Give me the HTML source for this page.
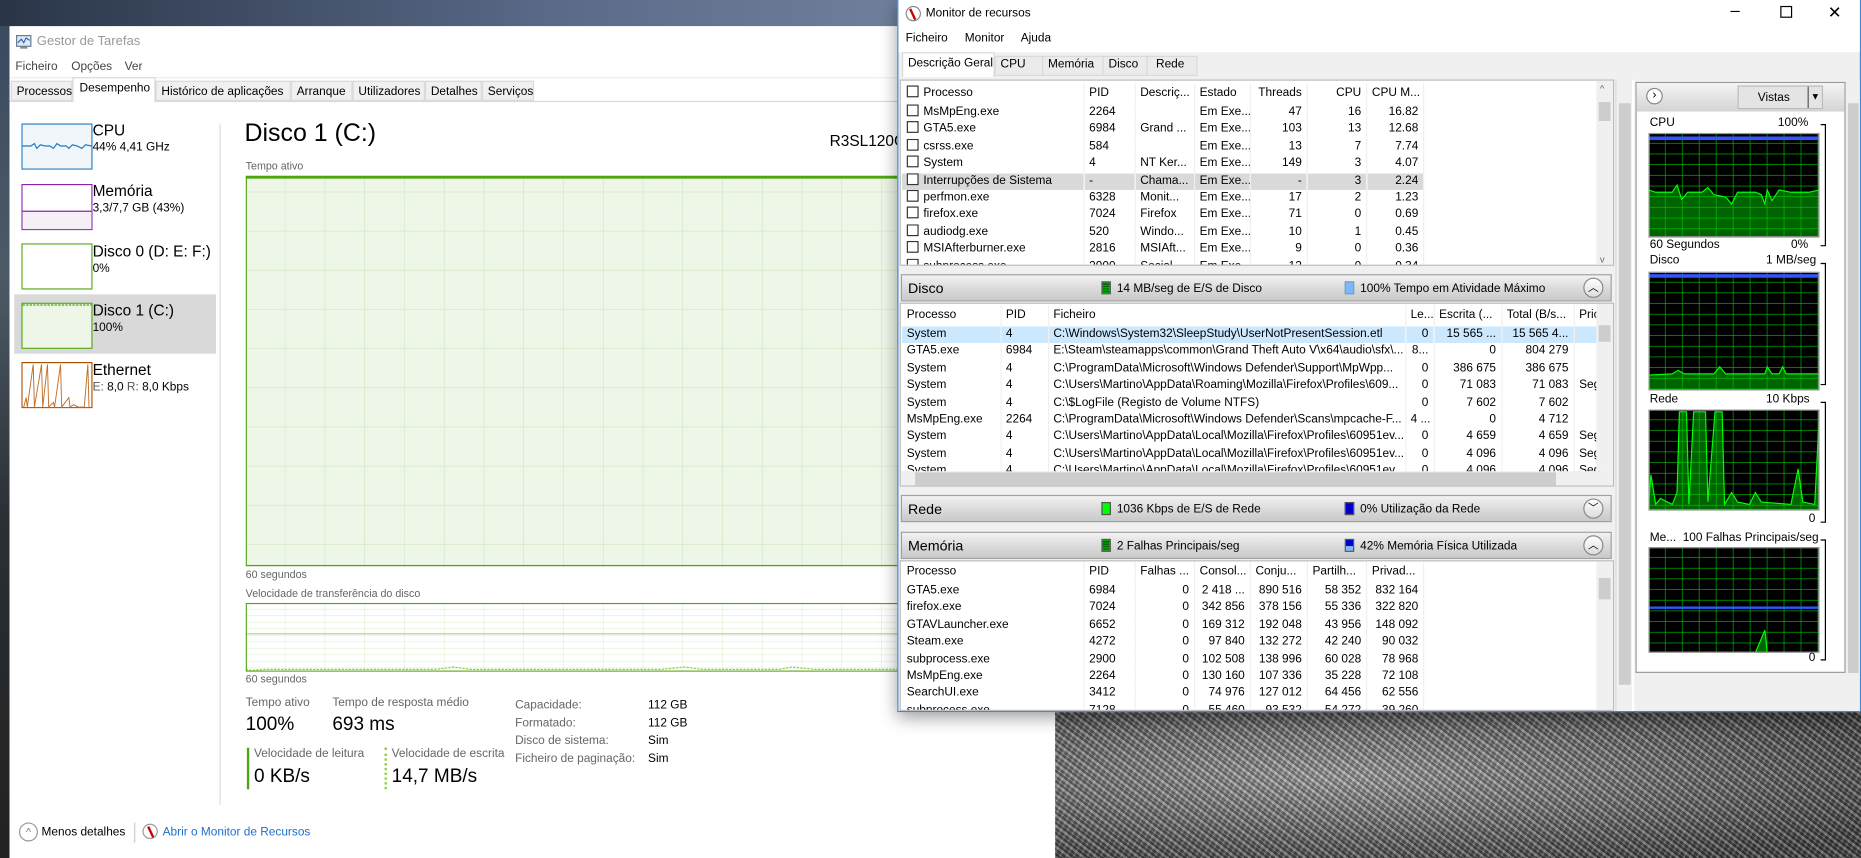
<!DOCTYPE html>
<html><head><meta charset="utf-8"><style>
*{margin:0;padding:0;box-sizing:border-box}
body{width:1861px;height:858px;overflow:hidden;background:#333;font-family:"Liberation Sans",sans-serif}
#s{position:absolute;left:0;top:0;width:1568px;height:723px;transform:scale(1.18686);transform-origin:0 0;overflow:hidden}
.a{position:absolute;white-space:nowrap}
table{border-collapse:collapse;table-layout:fixed;position:absolute;font-size:10px;color:#000}
td{height:14.4px;padding:0 4px;overflow:hidden;white-space:nowrap;text-overflow:clip;border-right:1px solid #f0f0f0;line-height:14.4px}
td.r{text-align:right}
tr.h td{height:18px;color:#000}
.cb{display:inline-block;width:10px;height:10px;border:1px solid #333;vertical-align:-1px;margin-right:4px;background:#fff}
.sec{position:absolute;left:759px;width:599px;height:23px;background:linear-gradient(#f2f2f2,#dcdcdc 50%,#c9c9c9);border:1px solid #a0a0a0;font-size:10px}
.sec .t{position:absolute;left:5px;top:4px;font-size:12px}
.sec .l{position:absolute;top:5px;font-size:10px}
.sw{display:inline-block;width:8px;height:11px;border:1px solid #555;vertical-align:-2px;margin-right:5px}
.btn{position:absolute;right:6px;top:2px;width:17px;height:17px;border:1px solid #888;border-radius:50%;background:linear-gradient(#fff,#ddd);font-size:9px;text-align:center;line-height:15px}
.tm{font-size:10px;color:#000}
</style></head><body><div id="s">
<!-- wallpaper -->
<div class="a" style="left:0;top:0;width:1568px;height:723px;background:linear-gradient(90deg,#2a3548,#5a6a88 30%,#7e8ea8 60%,#98a6bb)"></div>
<div class="a" style="left:0;top:22px;width:10px;height:701px;background:linear-gradient(#3a4a60,#4d5a66 30%,#2a2f33 60%,#222)"></div>
<div class="a" style="left:889px;top:598px;width:679px;height:125px;background:radial-gradient(ellipse at 35% 45%,#a8a6a8,#7a7a7a 40%,#444 85%);"></div>
<div class="a" style="left:889px;top:598px;width:679px;height:125px;opacity:.45;background:repeating-linear-gradient(37deg,rgba(255,255,255,.5) 0 2px,rgba(0,0,0,.6) 2px 4px,rgba(255,255,255,.3) 4px 5px,rgba(0,0,0,.4) 5px 7px),repeating-linear-gradient(-61deg,rgba(255,255,255,.4) 0 2px,rgba(0,0,0,.5) 2px 5px);"></div>

<!-- Task manager -->
<div class="a" style="left:8px;top:22px;width:881px;height:701px;background:#fff"></div>
<svg class="a" style="left:13px;top:29px" width="14" height="13"><rect x="1" y="1" width="12" height="9" fill="#dfe9f5" stroke="#6a7a90"/><polyline points="2,7 5,4 7,7 9,3 12,5" fill="none" stroke="#2a6ac0"/><rect x="4" y="10" width="6" height="2" fill="#888"/></svg>
<div class="a" style="left:31px;top:29px;font-size:11px;color:#999">Gestor de Tarefas</div>
<div class="a" style="left:13px;top:51px;font-size:10px;color:#444">Ficheiro</div>
<div class="a" style="left:60px;top:51px;font-size:10px;color:#444">Opções</div>
<div class="a" style="left:105px;top:51px;font-size:10px;color:#444">Ver</div>
<div class="a" style="left:8px;top:65px;width:881px;height:1px;background:#eee"></div>
<div class="a" style="left:8px;top:85px;width:881px;height:1px;background:#d9d9d9"></div>
<div class="a tm" style="left:9px;top:68px;height:17px;width:52px;background:#f0f0f0;border:1px solid #d9d9d9;padding:3px 4px">Processos</div>
<div class="a tm" style="left:61px;top:65px;height:21px;width:70px;background:#fff;border:1px solid #d9d9d9;border-bottom:none;padding:3px 5px">Desempenho</div>
<div class="a tm" style="left:131px;top:68px;height:17px;width:114px;background:#f0f0f0;border:1px solid #d9d9d9;padding:3px 4px">Histórico de aplicações</div>
<div class="a tm" style="left:245px;top:68px;height:17px;width:52px;background:#f0f0f0;border:1px solid #d9d9d9;padding:3px 4px">Arranque</div>
<div class="a tm" style="left:297px;top:68px;height:17px;width:61px;background:#f0f0f0;border:1px solid #d9d9d9;padding:3px 4px">Utilizadores</div>
<div class="a tm" style="left:358px;top:68px;height:17px;width:48px;background:#f0f0f0;border:1px solid #d9d9d9;padding:3px 4px">Detalhes</div>
<div class="a tm" style="left:406px;top:68px;height:17px;width:44px;background:#f0f0f0;border:1px solid #d9d9d9;padding:3px 4px">Serviços</div>

<!-- left items -->
<div class="a" style="left:12px;top:248px;width:170px;height:50px;background:#d9d9d9"></div>
<svg class="a" style="left:18px;top:104px" width="60" height="39"><rect x=".5" y=".5" width="59" height="38" fill="#f1f6fb" stroke="#1f7ac4"/><polyline points="1,19 8,19 11,17 13,21 16,18 20,19 24,19 27,21 30,17 33,19 38,19 40,21 43,18 47,19 51,21 54,18 59,19" fill="none" stroke="#1f7ac4"/></svg>
<div class="a" style="left:78px;top:102px;font-size:13px">CPU</div><div class="a" style="left:78px;top:119px;font-size:10px">44% 4,41 GHz</div>
<svg class="a" style="left:18px;top:155px" width="60" height="39"><rect x=".5" y=".5" width="59" height="38" fill="#fff" stroke="#8e22b4"/><rect x="1" y="23" width="58" height="15" fill="#f4f0f6"/><line x1="1" y1="23" x2="59" y2="23" stroke="#8e22b4"/></svg>
<div class="a" style="left:78px;top:153px;font-size:13px">Memória</div><div class="a" style="left:78px;top:170px;font-size:10px">3,3/7,7 GB (43%)</div>
<svg class="a" style="left:18px;top:205px" width="60" height="39"><rect x=".5" y=".5" width="59" height="38" fill="#fff" stroke="#4da60c"/></svg>
<div class="a" style="left:78px;top:204px;font-size:13px">Disco 0 (D: E: F:)</div><div class="a" style="left:78px;top:221px;font-size:10px">0%</div>
<svg class="a" style="left:18px;top:255px" width="60" height="39"><rect x=".5" y=".5" width="59" height="38" fill="#eef6e8" stroke="#4da60c"/><line x1="1" y1="2" x2="59" y2="2" stroke="#4da60c" stroke-dasharray="2 1"/></svg>
<div class="a" style="left:78px;top:254px;font-size:13px">Disco 1 (C:)</div><div class="a" style="left:78px;top:271px;font-size:10px">100%</div>
<svg class="a" style="left:18px;top:305px" width="60" height="39"><rect x=".5" y=".5" width="59" height="38" fill="#fff" stroke="#a74f01"/><polyline points="2,38 4,30 5,38 10,2 11,38 17,2 18,38 22,2 23,38 27,34 28,38 33,2 34,38 40,30 41,38 44,36 48,38 53,38 56,2 57,38" fill="none" stroke="#c0702a" stroke-width=".8"/></svg>
<div class="a" style="left:78px;top:304px;font-size:13px">Ethernet</div><div class="a" style="left:78px;top:321px;font-size:10px;color:#555">E: <span style="color:#000">8,0</span> R: <span style="color:#000">8,0 Kbps</span></div>
<div class="a" style="left:185px;top:104px;width:1px;height:574px;background:#ddd"></div>

<div class="a" style="left:206px;top:101px;font-size:21px">Disco 1 (C:)</div>
<div class="a" style="left:699px;top:111px;font-size:13px">R3SL120G</div>
<div class="a" style="left:207px;top:135px;font-size:9px;color:#666">Tempo ativo</div>
<svg class="a" style="left:207px;top:148px" width="560" height="330"><defs><pattern id="gp" width="33.5" height="33" patternUnits="userSpaceOnUse" x="0" y="-19"><path d="M33.5 0V33M0 33H33.5" fill="none" stroke="#cfe6c0" stroke-width="1"/></pattern></defs><rect width="560" height="330" fill="#eef6e8"/><rect width="560" height="330" fill="url(#gp)"/><rect x=".5" y=".5" width="559" height="328" fill="none" stroke="#4da60c"/><line x1="0" y1="1.5" x2="560" y2="1.5" stroke="#4da60c" stroke-width="2"/></svg>
<div class="a" style="left:207px;top:479px;font-size:9px;color:#666">60 segundos</div>
<div class="a" style="left:207px;top:495px;font-size:9px;color:#666">Velocidade de transferência do disco</div>
<svg class="a" style="left:207px;top:508px" width="560" height="58"><defs><pattern id="gq" width="33.5" height="5.5" patternUnits="userSpaceOnUse"><path d="M33.5 0V6M0 5.5H34" fill="none" stroke="#dcefd0"/></pattern></defs><rect width="560" height="58" fill="#fff"/><rect width="560" height="58" fill="url(#gq)"/><line x1="0" y1="26" x2="560" y2="26" stroke="#a8d48a"/><polyline points="0,56 5,57 15,56 160,56 175,54 190,56 350,56 370,54 385,56 450,56 460,54 470,55 480,56 560,56" fill="none" stroke="#8ed040" stroke-dasharray="2 1"/><rect x=".5" y=".5" width="559" height="57" fill="none" stroke="#4da60c"/></svg>
<div class="a" style="left:207px;top:567px;font-size:9px;color:#666">60 segundos</div>
<div class="a" style="left:207px;top:587px;font-size:10px;color:#666">Tempo ativo</div>
<div class="a" style="left:280px;top:587px;font-size:10px;color:#666">Tempo de resposta médio</div>
<div class="a" style="left:207px;top:602px;font-size:16px">100%</div>
<div class="a" style="left:280px;top:602px;font-size:16px">693 ms</div>
<div class="a" style="left:208px;top:630px;width:2px;height:35px;background:#4da60c"></div>
<div class="a" style="left:324px;top:630px;width:0;height:35px;border-left:2px dotted #8ed040"></div>
<div class="a" style="left:214px;top:630px;font-size:10px;color:#666">Velocidade de leitura</div>
<div class="a" style="left:330px;top:630px;font-size:10px;color:#666">Velocidade de escrita</div>
<div class="a" style="left:214px;top:646px;font-size:16px">0 KB/s</div>
<div class="a" style="left:330px;top:646px;font-size:16px">14,7 MB/s</div>
<div class="a" style="left:434px;top:587px;font-size:10px;color:#666;line-height:15px">Capacidade:<br>Formatado:<br>Disco de sistema:<br>Ficheiro de paginação:</div>
<div class="a" style="left:546px;top:587px;font-size:10px;line-height:15px">112 GB<br>112 GB<br>Sim<br>Sim</div>
<div class="a" style="left:16px;top:693px;width:16px;height:16px;border:1px solid #999;border-radius:50%;font-size:9px;text-align:center;line-height:14px;color:#777">^</div>
<div class="a" style="left:35px;top:696px;font-size:10px">Menos detalhes</div>
<div class="a" style="left:113px;top:693px;width:1px;height:17px;background:#ccc"></div>
<div class="a" style="left:120px;top:694px;width:13px;height:13px;border:1px solid #999;border-radius:50%;background:#fff"><div style="position:absolute;left:5px;top:1px;width:2px;height:10px;background:#c00;transform:rotate(-25deg)"></div></div>
<div class="a" style="left:137px;top:696px;font-size:10px;color:#1e6fd0">Abrir o Monitor de Recursos</div>

<!-- Resource monitor -->
<div class="a" style="left:756px;top:0;width:812px;height:600px;background:#f0f0f0;border:1px solid #3a8ad8;box-shadow:0 4px 14px rgba(0,0,0,.4)"></div>
<div class="a" style="left:757px;top:0;width:810px;height:22px;background:#fff"></div>
<div class="a" style="left:763px;top:5px;width:13px;height:13px;border:1px solid #888;border-radius:50%"><div style="position:absolute;left:4px;top:1px;width:2px;height:10px;background:#c00;transform:rotate(-25deg)"></div></div>
<div class="a" style="left:780px;top:6px;font-size:10px">Monitor de recursos</div>
<div class="a" style="left:1458px;top:0;font-size:14px;font-weight:300">–</div>
<div class="a" style="left:1500px;top:5px;width:10px;height:10px;border:1px solid #000"></div>
<div class="a" style="left:1540px;top:2px;font-size:14px">✕</div>
<div class="a" style="left:757px;top:22px;width:810px;height:22px;background:#fff"></div>
<div class="a" style="left:763px;top:27px;font-size:10px;word-spacing:2px">Ficheiro&nbsp;&nbsp; Monitor&nbsp;&nbsp; Ajuda</div>
<div class="a" style="left:838px;top:47px;width:171px;height:17px;background:#ebebeb;border:1px solid #d9d9d9"></div>
<div class="a" style="left:760px;top:44px;width:78px;height:21px;background:#fff;border:1px solid #d9d9d9;border-bottom:none;font-size:10px;padding:3px 4px">Descrição Geral</div>
<div class="a" style="left:843px;top:49px;font-size:10px">CPU</div>
<div class="a" style="left:878px;top:47px;width:1px;height:17px;background:#d9d9d9"></div>
<div class="a" style="left:883px;top:49px;font-size:10px">Memória</div>
<div class="a" style="left:929px;top:47px;width:1px;height:17px;background:#d9d9d9"></div>
<div class="a" style="left:934px;top:49px;font-size:10px">Disco</div>
<div class="a" style="left:966px;top:47px;width:1px;height:17px;background:#d9d9d9"></div>
<div class="a" style="left:974px;top:49px;font-size:10px">Rede</div>

<!-- overview table -->
<div class="a" style="left:758px;top:67px;width:602px;height:157px;background:#fff;border:1px solid #bbb;overflow:hidden">
<table style="left:1px;top:2px;width:440px">
<col style="width:153px"><col style="width:43px"><col style="width:50px"><col style="width:47px"><col style="width:48px"><col style="width:50px"><col style="width:48px">
<tr class="h"><td><span class="cb"></span>Processo</td><td>PID</td><td>Descriç...</td><td>Estado</td><td class="r">Threads</td><td class="r">CPU</td><td>CPU M...</td></tr>
<tr><td><span class="cb"></span>MsMpEng.exe</td><td>2264</td><td></td><td>Em Exe...</td><td class="r">47</td><td class="r">16</td><td class="r">16.82</td></tr>
<tr><td><span class="cb"></span>GTA5.exe</td><td>6984</td><td>Grand ...</td><td>Em Exe...</td><td class="r">103</td><td class="r">13</td><td class="r">12.68</td></tr>
<tr><td><span class="cb"></span>csrss.exe</td><td>584</td><td></td><td>Em Exe...</td><td class="r">13</td><td class="r">7</td><td class="r">7.74</td></tr>
<tr><td><span class="cb"></span>System</td><td>4</td><td>NT Ker...</td><td>Em Exe...</td><td class="r">149</td><td class="r">3</td><td class="r">4.07</td></tr>
<tr style="background:#d9d9d9"><td><span class="cb"></span>Interrupções de Sistema</td><td>-</td><td>Chama...</td><td>Em Exe...</td><td class="r">-</td><td class="r">3</td><td class="r">2.24</td></tr>
<tr><td><span class="cb"></span>perfmon.exe</td><td>6328</td><td>Monit...</td><td>Em Exe...</td><td class="r">17</td><td class="r">2</td><td class="r">1.23</td></tr>
<tr><td><span class="cb"></span>firefox.exe</td><td>7024</td><td>Firefox</td><td>Em Exe...</td><td class="r">71</td><td class="r">0</td><td class="r">0.69</td></tr>
<tr><td><span class="cb"></span>audiodg.exe</td><td>520</td><td>Windo...</td><td>Em Exe...</td><td class="r">10</td><td class="r">1</td><td class="r">0.45</td></tr>
<tr><td><span class="cb"></span>MSIAfterburner.exe</td><td>2816</td><td>MSIAft...</td><td>Em Exe...</td><td class="r">9</td><td class="r">0</td><td class="r">0.36</td></tr>
<tr><td><span class="cb"></span>subprocess.exe</td><td>2900</td><td>Social...</td><td>Em Exe...</td><td class="r">12</td><td class="r">0</td><td class="r">0.34</td></tr>
</table>
<div class="a" style="right:0;top:0;width:14px;height:157px;background:#f0f0f0"><div style="position:absolute;left:2px;top:18px;width:10px;height:16px;background:#cdcdcd"></div><div style="position:absolute;top:2px;left:3px;font-size:8px;color:#666">^</div><div style="position:absolute;bottom:2px;left:3px;font-size:8px;color:#666">v</div></div>
</div>

<div class="sec" style="top:231px"><span class="t">Disco</span><span class="l" style="left:168px"><span class="sw" style="background:repeating-linear-gradient(#0a0 0 1px,#060 1px 2px)"></span>14 MB/seg de E/S de Disco</span><span class="l" style="left:373px"><span class="sw" style="background:#7ab8ff;border-color:#89a"></span>100% Tempo em Atividade Máximo</span><div class="btn">︿</div></div>
<div class="a" style="left:758px;top:255px;width:602px;height:155px;background:#fff;border:1px solid #bbb;overflow:hidden">
<table style="left:1px;top:1px;width:599px">
<col style="width:83px"><col style="width:40px"><col style="width:301px"><col style="width:24px"><col style="width:57px"><col style="width:61px"><col style="width:33px">
<tr class="h"><td>Processo</td><td>PID</td><td>Ficheiro</td><td>Le...</td><td>Escrita (...</td><td>Total (B/s...</td><td>Pric</td></tr>
<tr style="background:#cce8ff"><td>System</td><td>4</td><td>C:\Windows\System32\SleepStudy\UserNotPresentSession.etl</td><td class="r">0</td><td class="r">15 565 ...</td><td class="r">15 565 4...</td><td></td></tr>
<tr><td>GTA5.exe</td><td>6984</td><td>E:\Steam\steamapps\common\Grand Theft Auto V\x64\audio\sfx\...</td><td class="r">8...</td><td class="r">0</td><td class="r">804 279</td><td></td></tr>
<tr><td>System</td><td>4</td><td>C:\ProgramData\Microsoft\Windows Defender\Support\MpWpp...</td><td class="r">0</td><td class="r">386 675</td><td class="r">386 675</td><td></td></tr>
<tr><td>System</td><td>4</td><td>C:\Users\Martino\AppData\Roaming\Mozilla\Firefox\Profiles\609...</td><td class="r">0</td><td class="r">71 083</td><td class="r">71 083</td><td>Seg</td></tr>
<tr><td>System</td><td>4</td><td>C:\$LogFile (Registo de Volume NTFS)</td><td class="r">0</td><td class="r">7 602</td><td class="r">7 602</td><td></td></tr>
<tr><td>MsMpEng.exe</td><td>2264</td><td>C:\ProgramData\Microsoft\Windows Defender\Scans\mpcache-F...</td><td class="r">4 ...</td><td class="r">0</td><td class="r">4 712</td><td></td></tr>
<tr><td>System</td><td>4</td><td>C:\Users\Martino\AppData\Local\Mozilla\Firefox\Profiles\60951ev...</td><td class="r">0</td><td class="r">4 659</td><td class="r">4 659</td><td>Seg</td></tr>
<tr><td>System</td><td>4</td><td>C:\Users\Martino\AppData\Local\Mozilla\Firefox\Profiles\60951ev...</td><td class="r">0</td><td class="r">4 096</td><td class="r">4 096</td><td>Seg</td></tr>
<tr><td>System</td><td>4</td><td>C:\Users\Martino\AppData\Local\Mozilla\Firefox\Profiles\60951ev...</td><td class="r">0</td><td class="r">4 096</td><td class="r">4 096</td><td>Seg</td></tr>
</table>
<div class="a" style="left:0;top:141px;width:600px;height:13px;background:#f0f0f0"><div style="position:absolute;left:12px;top:1px;width:540px;height:11px;background:#cdcdcd"></div></div>
<div class="a" style="right:0;top:0;width:14px;height:141px;background:#f0f0f0"><div style="position:absolute;left:2px;top:18px;width:10px;height:14px;background:#cdcdcd"></div></div>
</div>

<div class="sec" style="top:417px"><span class="t">Rede</span><span class="l" style="left:168px"><span class="sw" style="background:#0f0"></span>1036 Kbps de E/S de Rede</span><span class="l" style="left:373px"><span class="sw" style="background:#00c"></span>0% Utilização da Rede</span><div class="btn">﹀</div></div>
<div class="sec" style="top:448px"><span class="t">Memória</span><span class="l" style="left:168px"><span class="sw" style="background:repeating-linear-gradient(#0a0 0 1px,#060 1px 2px)"></span>2 Falhas Principais/seg</span><span class="l" style="left:373px"><span class="sw" style="background:linear-gradient(#00c 55%,#7ab8ff 55%)"></span>42% Memória Física Utilizada</span><div class="btn">︿</div></div>
<div class="a" style="left:758px;top:472px;width:602px;height:127px;background:#fff;border:1px solid #bbb;overflow:hidden">
<table style="left:1px;top:0;width:440px">
<col style="width:153px"><col style="width:43px"><col style="width:50px"><col style="width:47px"><col style="width:48px"><col style="width:50px"><col style="width:48px">
<tr class="h"><td>Processo</td><td>PID</td><td class="r">Falhas ...</td><td>Consol...</td><td>Conju...</td><td>Partilh...</td><td>Privad...</td></tr>
<tr><td>GTA5.exe</td><td>6984</td><td class="r">0</td><td class="r">2 418 ...</td><td class="r">890 516</td><td class="r">58 352</td><td class="r">832 164</td></tr>
<tr><td>firefox.exe</td><td>7024</td><td class="r">0</td><td class="r">342 856</td><td class="r">378 156</td><td class="r">55 336</td><td class="r">322 820</td></tr>
<tr><td>GTAVLauncher.exe</td><td>6652</td><td class="r">0</td><td class="r">169 312</td><td class="r">192 048</td><td class="r">43 956</td><td class="r">148 092</td></tr>
<tr><td>Steam.exe</td><td>4272</td><td class="r">0</td><td class="r">97 840</td><td class="r">132 272</td><td class="r">42 240</td><td class="r">90 032</td></tr>
<tr><td>subprocess.exe</td><td>2900</td><td class="r">0</td><td class="r">102 508</td><td class="r">138 996</td><td class="r">60 028</td><td class="r">78 968</td></tr>
<tr><td>MsMpEng.exe</td><td>2264</td><td class="r">0</td><td class="r">130 160</td><td class="r">107 336</td><td class="r">35 228</td><td class="r">72 108</td></tr>
<tr><td>SearchUI.exe</td><td>3412</td><td class="r">0</td><td class="r">74 976</td><td class="r">127 012</td><td class="r">64 456</td><td class="r">62 556</td></tr>
<tr><td>subprocess.exe</td><td>7128</td><td class="r">0</td><td class="r">55 460</td><td class="r">93 532</td><td class="r">54 272</td><td class="r">39 260</td></tr>
</table>
<div class="a" style="right:0;top:0;width:14px;height:127px;background:#f0f0f0"><div style="position:absolute;left:2px;top:14px;width:10px;height:18px;background:#cdcdcd"></div></div>
</div>

<!-- main vertical scrollbar -->
<div class="a" style="left:1361px;top:67px;width:14px;height:532px;background:#f0f0f0;border-left:1px solid #ddd"><div style="position:absolute;left:2px;top:20px;width:10px;height:490px;background:#cdcdcd"></div></div>
<div class="a" style="left:1375px;top:67px;width:2px;height:532px;background:#fff"></div>

<!-- right pane -->
<div class="a" style="left:1378px;top:69px;width:177px;height:498px;background:#fff;border:1px solid #999"></div>
<div class="a" style="left:1379px;top:70px;width:175px;height:24px;background:linear-gradient(#f4f4f4,#d4d4d4)"></div>
<div class="a" style="left:1387px;top:74px;width:14px;height:14px;border:1px solid #888;border-radius:50%;background:#fff;font-size:10px;text-align:center;line-height:12px">›</div>
<div class="a" style="left:1464px;top:72px;width:72px;height:20px;background:#e4e4e4;border:1px solid #bbb;font-size:10px;padding:4px 0 0 16px">Vistas<span style="position:absolute;right:0;top:0;width:12px;height:18px;border-left:1px solid #555;font-size:8px;text-align:center;line-height:18px">▼</span></div>
<div class="a" style="left:1390px;top:98px;font-size:10px">CPU</div><div class="a" style="left:1498px;top:98px;font-size:10px">100%</div>
<div class="a" style="left:1390px;top:201px;font-size:10px">60 Segundos</div><div class="a" style="left:1509px;top:201px;font-size:10px">0%</div>
<div class="a" style="left:1390px;top:214px;font-size:10px">Disco</div><div class="a" style="left:1488px;top:214px;font-size:10px">1 MB/seg</div>
<div class="a" style="left:1524px;top:316px;font-size:10px">0</div>
<div class="a" style="left:1390px;top:331px;font-size:10px">Rede</div><div class="a" style="left:1488px;top:331px;font-size:10px">10 Kbps</div>
<div class="a" style="left:1524px;top:432px;font-size:10px">0</div>
<div class="a" style="left:1390px;top:448px;font-size:10px">Me...&nbsp; 100 Falhas Principais/seg</div>
<div class="a" style="left:1524px;top:549px;font-size:10px">0</div>
<svg class="a" style="left:1533px;top:104px" width="8" height="460"><path d="M1 1H5V103H1M1 118H5V220H1M1 235H5V336H1M1 351H5V452H1" fill="none" stroke="#000"/></svg>
<svg class="a" style="left:1389px;top:112px" width="144" height="88"><defs><pattern id="bg" width="14.3" height="9" patternUnits="userSpaceOnUse"><path d="M14.3 0V9M0 9H14.3" fill="none" stroke="#0c0" stroke-width="1"/></pattern></defs><rect width="144" height="88" fill="#000"/><path d="M0 48 6 50 20 50 24 44 28 56 33 50 45 50 50 46 55 52 65 54 70 60 75 50 90 50 95 52 98 60 100 48 104 57 110 48 120 50 135 50 144 48V88H0Z" fill="#006400"/><rect width="144" height="88" fill="url(#bg)"/><path d="M0 48 6 50 20 50 24 44 28 56 33 50 45 50 50 46 55 52 65 54 70 60 75 50 90 50 95 52 98 60 100 48 104 57 110 48 120 50 135 50 144 48" fill="none" stroke="#0f0"/><rect y="3" width="144" height="3" fill="#3355ff"/><rect x=".5" y=".5" width="143" height="87" fill="none" stroke="#999"/></svg>
<svg class="a" style="left:1389px;top:229px" width="144" height="100"><rect width="144" height="100" fill="#000"/><path d="M0 87 20 86 25 83 30 86 55 86 60 80 65 86 98 86 100 80 104 86 110 86 113 80 116 86 144 86V100H0Z" fill="#006400"/><rect width="144" height="100" fill="url(#bg)"/><path d="M0 87 20 86 25 83 30 86 55 86 60 80 65 86 98 86 100 80 104 86 110 86 113 80 116 86 144 86" fill="none" stroke="#0f0"/><rect y="2" width="144" height="3" fill="#3355ff"/><rect x=".5" y=".5" width="143" height="99" fill="none" stroke="#999"/></svg>
<svg class="a" style="left:1389px;top:345px" width="144" height="85"><rect width="144" height="85" fill="#000"/><path d="M0 80 2 55 6 80 10 75 20 80 24 70 26 2 32 2 34 80 38 2 48 2 50 78 56 2 62 2 64 80 70 70 75 78 85 80 90 70 95 78 120 80 126 50 130 78 140 80 144 2V85H0Z" fill="#006400"/><rect width="144" height="85" fill="url(#bg)"/><path d="M0 80 2 55 6 80 10 75 20 80 24 70 26 2 32 2 34 80 38 2 48 2 50 78 56 2 62 2 64 80 70 70 75 78 85 80 90 70 95 78 120 80 126 50 130 78 140 80 144 2" fill="none" stroke="#0f0"/><rect x=".5" y=".5" width="143" height="84" fill="none" stroke="#999"/></svg>
<svg class="a" style="left:1389px;top:461px" width="144" height="89"><rect width="144" height="89" fill="#000"/><rect width="144" height="89" fill="url(#bg)"/><rect y="50" width="144" height="2" fill="#3355ff"/><path d="M90 89 98 70 100 89" fill="#006400" stroke="#0f0"/><rect x=".5" y=".5" width="143" height="88" fill="none" stroke="#999"/></svg>
<div class="a" style="left:1556px;top:67px;width:11px;height:532px;background:#f0f0f0"><div style="position:absolute;left:1px;top:20px;width:9px;height:480px;background:#cdcdcd"></div></div>
</div></body></html>
